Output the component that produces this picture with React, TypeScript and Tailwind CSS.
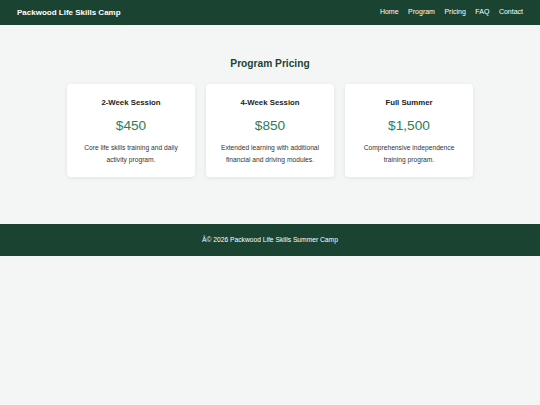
import React from "react";

const plans = [
  { name: "2-Week Session", price: "$450", desc: ["Core life skills training and daily", "activity program."] },
  { name: "4-Week Session", price: "$850", desc: ["Extended learning with additional", "financial and driving modules."] },
  { name: "Full Summer", price: "$1,500", desc: ["Comprehensive independence", "training program."] },
];

export default function App() {
  return (
    <div className="min-h-[405px] bg-[#f4f6f5] font-['Liberation_Sans',Arial,sans-serif]">
      <header className="h-[25px] bg-[#1b4332] flex items-center justify-between px-[17px] text-white">
        <span className="text-[8px] font-bold">Packwood Life Skills Camp</span>
        <nav className="flex gap-[9.5px] text-[7px]">
          <span>Home</span>
          <span>Program</span>
          <span>Pricing</span>
          <span>FAQ</span>
          <span>Contact</span>
        </nav>
      </header>
      <main className="pt-[32px] pb-[47px]">
        <h2 className="text-center text-[10.2px] font-bold text-[#1b4332] leading-[13px]">Program Pricing</h2>
        <div className="mt-[14px] flex justify-center gap-[11px]">
          {plans.map((p) => (
            <div key={p.name} className="w-[128px] h-[93px] bg-white rounded-[4px] shadow-[0_1px_4px_rgba(0,0,0,0.08)] flex flex-col items-center pt-[14px] text-center">
              <div className="text-[7.8px] font-bold text-[#222] leading-[9px]">{p.name}</div>
              <div className="mt-[11px] text-[13.7px] text-[#2f7d58] leading-[16px]">{p.price}</div>
              <div className="mt-[8px] text-[6.7px] text-[#333] leading-[12px]">
                {p.desc.map((l) => (
                  <div key={l}>{l}</div>
                ))}
              </div>
            </div>
          ))}
        </div>
      </main>
      <footer className="h-[32px] bg-[#1b4332] flex items-center justify-center text-white text-[6.7px]">
        Â© 2026 Packwood Life Skills Summer Camp
      </footer>
    </div>
  );
}
